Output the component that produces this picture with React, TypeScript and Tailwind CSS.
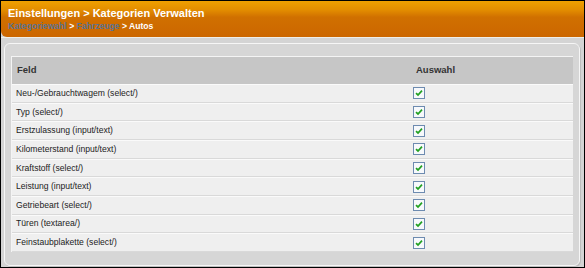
import React from 'react';

const felder = [
  'Neu-/Gebrauchtwagem (select/)',
  'Typ (select/)',
  'Erstzulassung (input/text)',
  'Kilometerstand (input/text)',
  'Kraftstoff (select/)',
  'Leistung (input/text)',
  'Getriebeart (select/)',
  'Türen (textarea/)',
  'Feinstaubplakette (select/)',
];

// kleines Häkchen-Kästchen wie im alten Admin-Theme
const CheckIcon: React.FC = () => (
  <svg width="12" height="12" viewBox="0 0 12 12" className="block">
    <rect x="0.5" y="0.5" width="11" height="11" fill="#f7f9fc" stroke="#6d8bb0" />
    <path d="M3 6.2 L5 8 L9 3.6" fill="none" stroke="#22a022" strokeWidth="1.7" />
  </svg>
);

const App: React.FC = () => {
  return (
    <div
      className="flex h-[268px] w-[585px] flex-col border border-black bg-[#d4d4d4]"
      style={{ fontFamily: '"Liberation Sans", Arial, sans-serif' }}
    >
      {/* Kopfbereich */}
      <div className="h-[36px] shrink-0 rounded-bl-[6px] bg-[linear-gradient(to_bottom,#efa000_0%,#e38d00_25%,#d07000_45%,#cc6600_100%)] px-[7px] pt-[6px]">
        <div className="text-[11px] leading-[13px] font-bold text-white">
          Einstellungen &gt; Kategorien Verwalten
        </div>
        <div className="text-[8.6px] leading-[12px] font-bold text-white">
          <span className="text-[#587395]">Kategoriewahl</span> &gt;{' '}
          <span className="text-[#587395]">Fahrzeuge</span> &gt; Autos
        </div>
      </div>
      <div className="h-px shrink-0 bg-[#f0eee8]" />

      {/* Inhalt */}
      <div className="flex flex-1 flex-col pt-[5px] pr-[4px] pb-px pl-[3px]">
        <div className="flex-1 rounded-[6px] border border-[#f6f6f6] bg-[#d6d6d6] pt-[12px] pr-[6px] pl-[6px] shadow-[1px_1px_0_#bdbdbd]">
          <div className="border-t border-l border-[#f4f4f4]">
            <div className="grid h-[27px] grid-cols-[398px_1fr] items-center bg-[#c6c6c6] text-[9.5px] font-bold text-[#333]">
              <div className="pl-[5px]">Feld</div>
              <div className="pl-[6px]">Auswahl</div>
            </div>
            {felder.map((feld) => (
              <div
                key={feld}
                className="grid h-[18.67px] grid-cols-[398px_1fr] items-center border-t border-b border-t-[#fafafa] border-b-[#d9d9d9] bg-[#efefef] text-[8.6px] text-[#222]"
              >
                <div className="pl-[4px]">{feld}</div>
                <div className="pl-[3px]">
                  <CheckIcon />
                </div>
              </div>
            ))}
          </div>
        </div>
      </div>
    </div>
  );
};

export default App;
